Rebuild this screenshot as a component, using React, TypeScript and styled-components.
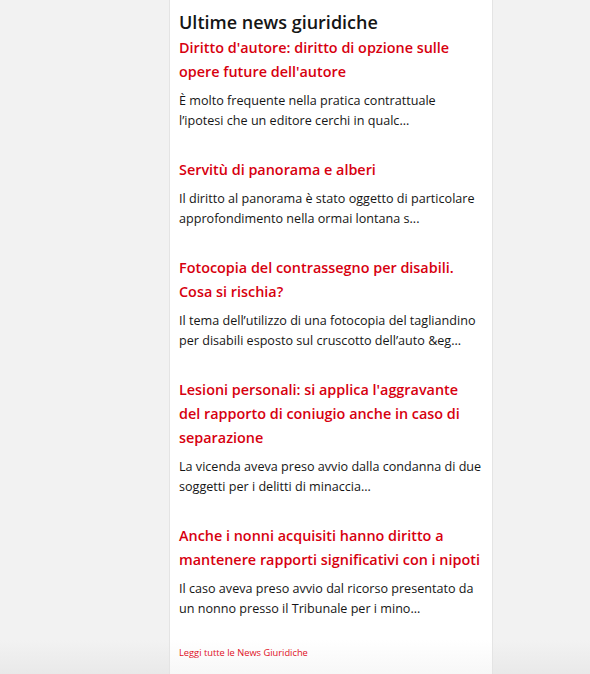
import React from 'react';
import styled, { createGlobalStyle } from 'styled-components';

const GlobalStyle = createGlobalStyle`
  html, body {
    margin: 0;
    padding: 0;
    background: #f2f2f2;
    font-family: "Open Sans", "Liberation Sans", sans-serif;
  }
`;

const Page = styled.div`
  min-height: 674px;
  display: flex;
  padding-left: 169px;
  background: linear-gradient(to bottom, #f2f2f2 0, #f2f2f2 640px, #e9e9e9 674px);
`;

const Panel = styled.aside`
  width: 304px;
  padding: 10px 9px 0 9px;
  background: linear-gradient(to bottom, #fff 0, #fff 640px, #f7f7f7 674px);
  border-left: 1px solid #e4e4e4;
  border-right: 1px solid #e4e4e4;
`;

const Title = styled.h2`
  margin: 0 0 2px;
  font-size: 18px;
  line-height: 24px;
  font-weight: 600;
  color: #151515;
`;

const Item = styled.article`
  margin-bottom: 27px;
`;

const Heading = styled.a`
  display: block;
  font-size: 14.4px;
  line-height: 24px;
  font-weight: 600;
  color: #d7000f;
  text-decoration: none;
`;

const Excerpt = styled.p`
  margin: 7px 0 0;
  font-size: 12.6px;
  line-height: 20px;
  color: #161616;
`;

const MoreLink = styled.a`
  display: block;
  margin-top: 1px;
  padding-bottom: 14px;
  font-size: 9.3px;
  line-height: 14px;
  color: #e0101c;
  text-decoration: none;
`;

const news = [
  {
    title: "Diritto d'autore: diritto di opzione sulle opere future dell'autore",
    text: 'È molto frequente nella pratica contrattuale l’ipotesi che un editore cerchi in qualc...',
  },
  {
    title: 'Servitù di panorama e alberi',
    text: 'Il diritto al panorama è stato oggetto di particolare approfondimento nella ormai lontana s...',
  },
  {
    title: 'Fotocopia del contrassegno per disabili. Cosa si rischia?',
    text: 'Il tema dell’utilizzo di una fotocopia del tagliandino per disabili esposto sul cruscotto dell’auto &eg...',
  },
  {
    title: "Lesioni personali: si applica l'aggravante del rapporto di coniugio anche in caso di separazione",
    text: 'La vicenda aveva preso avvio dalla condanna di due soggetti per i delitti di minaccia...',
  },
  {
    title: 'Anche i nonni acquisiti hanno diritto a mantenere rapporti significativi con i nipoti',
    text: 'Il caso aveva preso avvio dal ricorso presentato da un nonno presso il Tribunale per i mino...',
  },
];

export default function App() {
  return (
    <>
      <GlobalStyle />
      <Page>
        <Panel>
          <Title>Ultime news giuridiche</Title>
          {news.map((n, i) => (
            <Item key={i}>
              <Heading href="#">{n.title}</Heading>
              <Excerpt>{n.text}</Excerpt>
            </Item>
          ))}
          <MoreLink href="#">Leggi tutte le News Giuridiche</MoreLink>
        </Panel>
      </Page>
    </>
  );
}
